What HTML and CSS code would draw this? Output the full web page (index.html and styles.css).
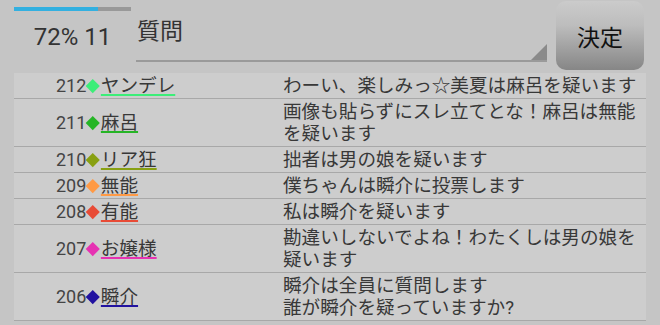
FILE: index.html
```html
<!DOCTYPE html>
<html lang="ja">
<head>
    <meta charset="UTF-8">
    <meta name="viewport" content="width=device-width, initial-scale=1.0">
    <title>質問</title>
    <link rel="stylesheet" href="styles.css">
</head>
<body>
    <div class="top">
        <div class="status">
            <div class="progress"><div class="progress-fill" style="width: 72%"></div></div>
            <div class="count">72% 11</div>
        </div>
        <div class="question"><span class="question-text">質問</span></div>
        <button class="decide-btn">決定</button>
    </div>

    <ul class="posts">
        <li class="post">
            <div class="who"><span class="num">212</span><span class="mark c-yandere"></span><span class="name c-yandere">ヤンデレ</span></div>
            <div class="msg">わーい、楽しみっ☆美夏は麻呂を疑います</div>
        </li>
        <li class="post">
            <div class="who"><span class="num">211</span><span class="mark c-maro"></span><span class="name c-maro">麻呂</span></div>
            <div class="msg">画像も貼らずにスレ立てとな！麻呂は無能を疑います</div>
        </li>
        <li class="post">
            <div class="who"><span class="num">210</span><span class="mark c-riakyo"></span><span class="name c-riakyo">リア狂</span></div>
            <div class="msg">拙者は男の娘を疑います</div>
        </li>
        <li class="post">
            <div class="who"><span class="num">209</span><span class="mark c-munou"></span><span class="name c-munou">無能</span></div>
            <div class="msg">僕ちゃんは瞬介に投票します</div>
        </li>
        <li class="post">
            <div class="who"><span class="num">208</span><span class="mark c-yuunou"></span><span class="name c-yuunou">有能</span></div>
            <div class="msg">私は瞬介を疑います</div>
        </li>
        <li class="post">
            <div class="who"><span class="num">207</span><span class="mark c-ojou"></span><span class="name c-ojou">お嬢様</span></div>
            <div class="msg">勘違いしないでよね！わたくしは男の娘を疑います</div>
        </li>
        <li class="post">
            <div class="who"><span class="num">206</span><span class="mark c-shunsuke"></span><span class="name c-shunsuke">瞬介</span></div>
            <div class="msg">瞬介は全員に質問します<br>誰が瞬介を疑っていますか?</div>
        </li>
    </ul>
</body>
</html>
```

FILE: styles.css
```css
body {
    margin: 0;
    background: #c5c5c5;
    font-family: Roboto, "Noto Sans CJK JP", sans-serif;
    color: #383838;
}
.top {
    display: flex;
    height: 73px;
    padding-left: 14px;
}
.status {
    width: 117px;
    padding-top: 7px;
}
.progress {
    height: 4px;
    background: #999;
}
.progress-fill {
    height: 100%;
    background: #33b0e0;
}
.count {
    margin-top: 12px;
    text-align: center;
    font-size: 24px;
    line-height: 28px;
    color: #333;
}
.question {
    position: relative;
    box-sizing: border-box;
    width: 411px;
    height: 62px;
    margin-left: 5px;
    padding: 20px 0 0 1px;
    border-bottom: 2px solid #9a9a9a;
    font-size: 23px;
    line-height: 23px;
    color: #333;
}
.question::after {
    content: "";
    position: absolute;
    right: 0;
    bottom: 0;
    border-style: solid;
    border-width: 0 0 16px 16px;
    border-color: transparent transparent #8a8a8a transparent;
}
.decide-btn {
    width: 88px;
    height: 69px;
    margin: 1px 0 0 9px;
    border: none;
    border-radius: 10px;
    background: linear-gradient(#cbcbcb, #bdbdbd 35%, #868686);
    font-family: "Noto Sans CJK JP", sans-serif;
    font-size: 23px;
    color: #111;
    padding: 0;
}
.posts {
    list-style: none;
    margin: 0 14px;
    padding: 0;
    background: #cdcdcd;
}
.post {
    display: flex;
    padding: 2px 0 1px;
    border-bottom: 1px solid #a8a8a8;
    font-size: 18.6px;
    line-height: 22px;
}
.who {
    display: flex;
    align-items: center;
    width: 227px;
    padding-left: 42px;
}
.num {
    font-size: 18px;
    color: #444;
}
.mark {
    display: inline-block;
    width: 9.5px;
    height: 9.5px;
    margin: 0 3px 0 2px;
    transform: rotate(45deg);
}
.name {
    text-decoration: underline 2px;
    text-underline-offset: 2px;
    color: #383838;
}
.msg {
    flex: 1;
    padding-right: 4px;
}
.mark.c-yandere { background: #3cee78; }
.name.c-yandere { text-decoration-color: #3cee78; }
.mark.c-maro { background: #26b526; }
.name.c-maro { text-decoration-color: #26b526; }
.mark.c-riakyo { background: #88a012; }
.name.c-riakyo { text-decoration-color: #88a012; }
.mark.c-munou { background: #ff9a45; }
.name.c-munou { text-decoration-color: #ff9a45; }
.mark.c-yuunou { background: #e84b36; }
.name.c-yuunou { text-decoration-color: #e84b36; }
.mark.c-ojou { background: #e632b2; }
.name.c-ojou { text-decoration-color: #e632b2; }
.mark.c-shunsuke { background: #2212a0; }
.name.c-shunsuke { text-decoration-color: #2212a0; }
```
